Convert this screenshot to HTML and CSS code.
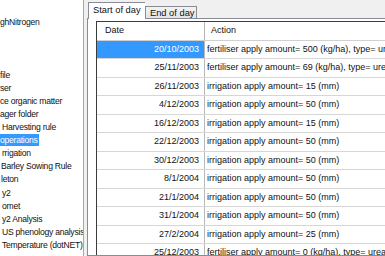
FILE: index.html
```html
<!DOCTYPE html>
<html>
<head>
<meta charset="utf-8">
<title>Operations</title>
<link rel="stylesheet" href="styles.css">
</head>
<body>
<div class="app">
  <div class="tree">
    <div class="node"></div>
    <div class="node">ghNitrogen</div>
    <div class="node"></div>
    <div class="node"></div>
    <div class="node"></div>
    <div class="node">file</div>
    <div class="node">ser</div>
    <div class="node">ce organic matter</div>
    <div class="node">ager folder</div>
    <div class="node in2">Harvesting rule</div>
    <div class="node"><span class="selected">operations</span></div>
    <div class="node in2">rrigation</div>
    <div class="node in1">Barley Sowing Rule</div>
    <div class="node in1">leton</div>
    <div class="node in2">y2</div>
    <div class="node in2">omet</div>
    <div class="node in2">y2 Analysis</div>
    <div class="node in2">US phenology analysis</div>
    <div class="node in2">Temperature (dotNET)</div>
  </div>
  <div class="main">
    <div class="tabs">
      <div class="tab active">Start of day</div>
      <div class="tab">End of day</div>
    </div>
    <div class="page">
      <div class="grid">
        <div class="row head"><div class="cell date">Date</div><div class="cell action">Action</div></div>
        <div class="row"><div class="cell date sel">20/10/2003</div><div class="cell action">fertiliser apply amount= 500 (kg/ha), type= urea_N</div></div>
        <div class="row"><div class="cell date">25/11/2003</div><div class="cell action">fertiliser apply amount= 69 (kg/ha), type= urea_N</div></div>
        <div class="row"><div class="cell date">26/11/2003</div><div class="cell action">irrigation apply amount= 15 (mm)</div></div>
        <div class="row"><div class="cell date">4/12/2003</div><div class="cell action">irrigation apply amount= 50 (mm)</div></div>
        <div class="row"><div class="cell date">16/12/2003</div><div class="cell action">irrigation apply amount= 15 (mm)</div></div>
        <div class="row"><div class="cell date">22/12/2003</div><div class="cell action">irrigation apply amount= 50 (mm)</div></div>
        <div class="row"><div class="cell date">30/12/2003</div><div class="cell action">irrigation apply amount= 50 (mm)</div></div>
        <div class="row"><div class="cell date">8/1/2004</div><div class="cell action">irrigation apply amount= 50 (mm)</div></div>
        <div class="row"><div class="cell date">21/1/2004</div><div class="cell action">irrigation apply amount= 50 (mm)</div></div>
        <div class="row"><div class="cell date">31/1/2004</div><div class="cell action">irrigation apply amount= 50 (mm)</div></div>
        <div class="row"><div class="cell date">27/2/2004</div><div class="cell action">irrigation apply amount= 25 (mm)</div></div>
        <div class="row"><div class="cell date">25/12/2003</div><div class="cell action">fertiliser apply amount= 0 (kg/ha), type= urea_N</div></div>
      </div>
    </div>
  </div>
</div>
</body>
</html>
```

FILE: styles.css
```css
* { box-sizing: border-box; margin: 0; padding: 0; }
html, body { width: 385px; height: 256px; overflow: hidden; }
body {
  background: #f0f0f0;
  font-family: "Liberation Sans", Arial, sans-serif;
  color: #111;
}
.app { display: flex; height: 256px; }

.tree {
  width: 84px;
  flex: none;
  background: #fff;
  border-right: 1px solid #a8a8a8;
  padding-top: 3.2px;
  font-size: 8.6px;
  letter-spacing: -0.25px;
  overflow: hidden;
  white-space: nowrap;
}
.node { height: 13.1px; line-height: 13.1px; }
.node.in1 { padding-left: 1px; }
.node.in2 { padding-left: 2px; }
.selected {
  display: inline-block;
  background: #3399ff;
  color: #fff;
  height: 12px;
  line-height: 12px;
  padding-right: 1px;
}

.main {
  flex: 1;
  min-width: 0;
  display: flex;
  flex-direction: column;
  padding-left: 3px;
}
.tabs {
  display: flex;
  align-items: flex-end;
  height: 18px;
  padding-left: 1px;
  font-size: 9.3px;
  position: relative;
  z-index: 1;
}
.tab {
  height: 12px;
  width: 52px;
  line-height: 12px;
  padding-left: 4px;
  border: 1px solid #898c95;
  border-bottom: none;
  background: linear-gradient(#f3f3f3, #e3e3e3);
  white-space: nowrap;
}
.tab.active {
  height: 17px;
  width: 57px;
  margin-bottom: -1px;
  line-height: 15px;
  padding-left: 4px;
  background: #fff;
  border-right: none;
}

.page {
  flex: 1;
  border: 1px solid #898c95;
  border-right: none;
  background: #fff;
  padding: 2px 0 0 8px;
  overflow: hidden;
}
.grid {
  border-left: 1px solid #3c3c3c;
  border-top: 1px solid #3c3c3c;
  font-size: 9px;
  width: 400px;
}
.row {
  display: flex;
  height: 18.5px;
  border-bottom: 1px solid #d6d6d6;
  white-space: nowrap;
}
.row.head { height: 18.5px; border-bottom-color: #d0d0d0; }
.cell { line-height: 17.5px; overflow: hidden; }
.date {
  width: 108px;
  flex: none;
  text-align: right;
  padding-right: 5px;
  border-right: 1px solid #b8b8b8;
}
.action { flex: 1; padding-left: 2px; }
.head .date { text-align: left; padding-left: 8px; }
.head .action { padding-left: 6px; }
.date.sel { background: #3399ff; color: #fff; }
```
